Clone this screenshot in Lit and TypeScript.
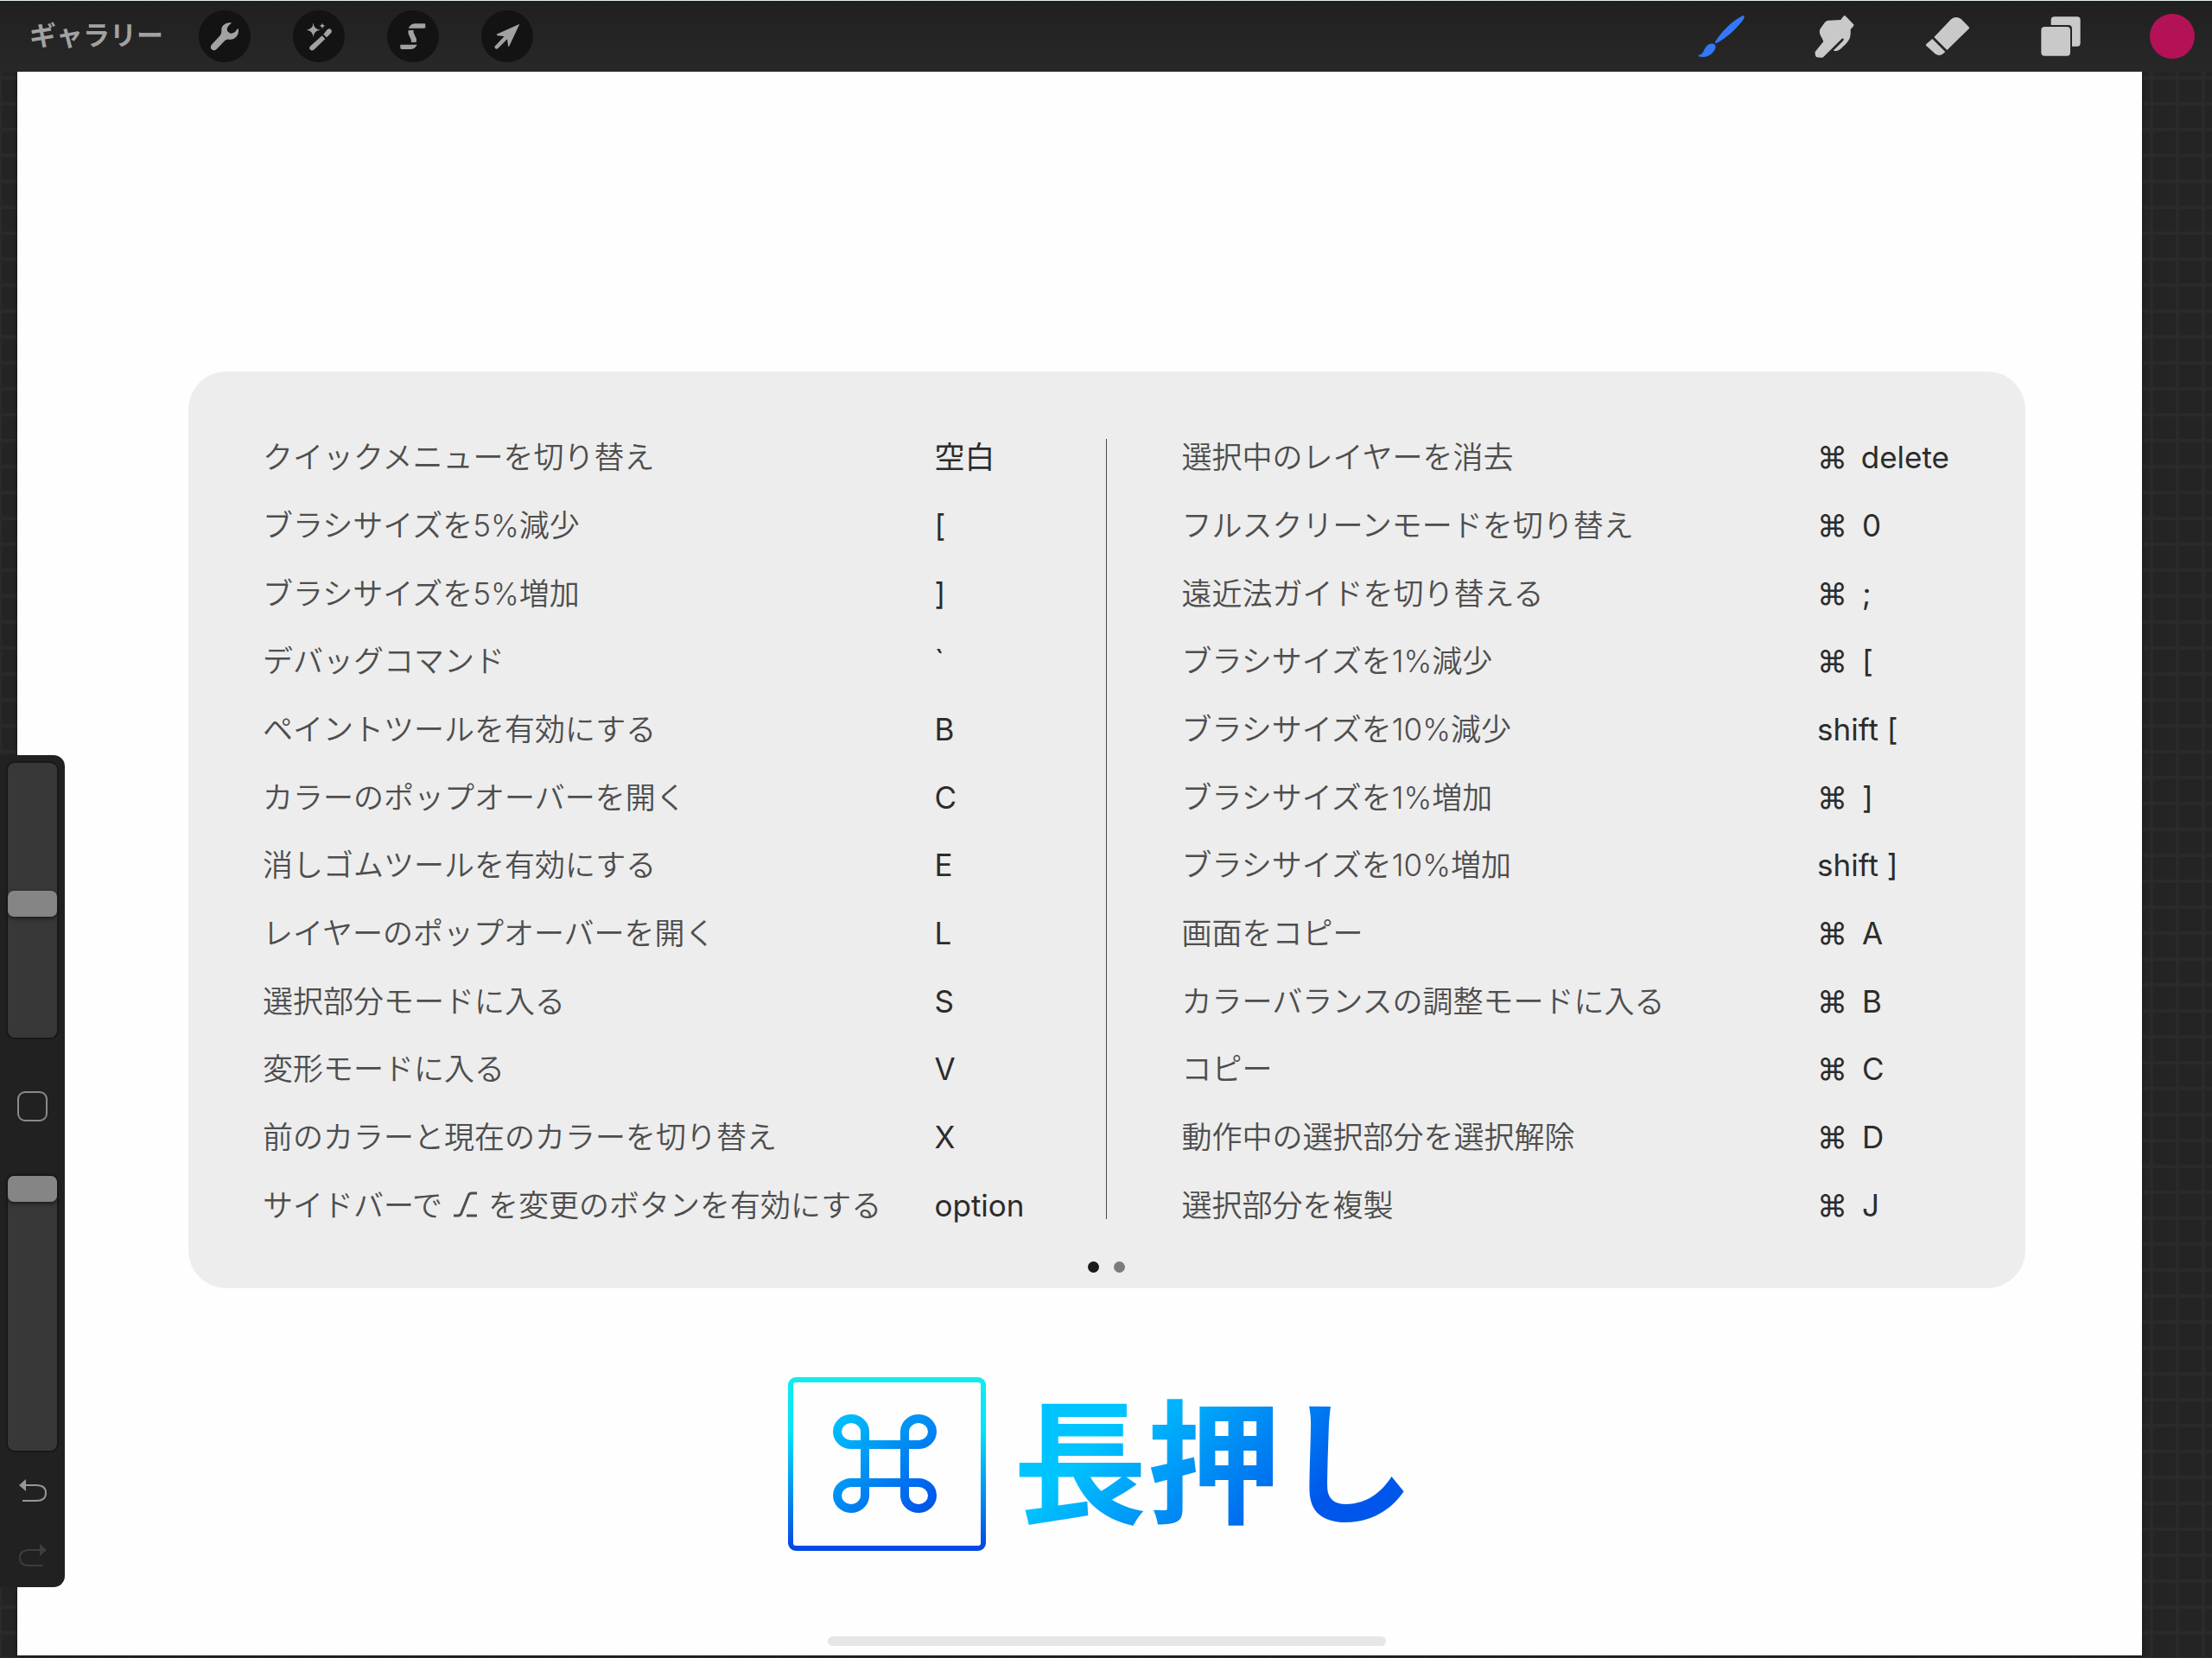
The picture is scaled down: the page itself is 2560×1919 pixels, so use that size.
import { LitElement, html, svg, css } from "lit";
import { customElement, property } from "lit/decorators.js";

const icon = (w: number, h: number, body: unknown, box = `0 0 ${w} ${h}`, cls = "icon") =>
  html`<svg class=${cls} width=${w} height=${h} viewBox=${box} aria-hidden="true">${body}</svg>`;

const wrench = svg`<path fill="currentColor" d="M144 79C130 78 110 86 111 104Q112 117 106 124L78 154C66 166 81 181 93 172L122 142Q129 135 137 137C156 140 172 124 170 102Q169 97 164 103C158 117 140 119 136 112C128 106 128 96 140 85Q147 80 144 79Z"/>`;
const wand = svg`<g fill="currentColor"><path d="M429 79Q430 102 453 104Q430 106 429 130Q427 106 405 104Q427 102 429 79Z"/><path d="M460 79Q461 89 471 90Q461 91 460 101Q459 91 449 90Q459 89 460 79Z"/><path d="M464 119L477 103C485 94 498 104 490 115L475 130Z"/><path d="M459 124L470 135L432 172C422 181 409 169 419 160Z"/></g>`;
const selection = svg`<g fill="currentColor"><path d="M758 98Q766 82 782 82H813Q817 82 817 86V94Q817 98 813 98Z"/><path d="M757 106L775 104Q775 112 780 122Q788 134 786 146L768 147Q769 138 762 127Q756 118 757 106Z"/><path d="M730 155H788Q781 171 764 171H735Q730 171 730 166Z"/></g>`;
const arrow = svg`<path fill="currentColor" d="M1143 83L1108 158Q1104 166 1103 158L1100 136L1068 168C1062 174 1053 166 1058 160L1090 126L1067 124Q1060 122 1066 118Z"/>`;
const brush = svg`<g fill="currentColor"><path d="M230 55Q233 57 229 66C205 100 170 132 133 151L129 147C150 112 190 72 225 55Q229 53 230 55Z"/><path d="M104 157C113 150 126 150 130 157C134 164 129 176 121 183C108 198 88 201 73 196Q69 194 74 191C92 187 88 171 104 157Z"/></g>`;
const smudge = svg`<path fill="currentColor" d="M579 53Q582 54 612 86Q610 93 600 102C602 130 596 142 576 160C562 174 556 178 545 177Q538 174 545 171L574 142Q579 136 575 134Q571 132 567 137L508 196Q505 201 499 200L483 199Q476 196 477 180L506 144Q503 138 501 132C492 118 490 108 496 98L510 79Q515 72 522 71L566 69Q571 60 579 53Z"/>`;
const eraser = svg`<g fill="currentColor"><path d="M950 67Q967 54 985 66L1012 94Q1015 97 1012 100L936 174L891 129Z"/><path d="M885 135L930 180L922 187Q909 197 895 187L864 159Q861 156 864 153Z"/></g>`;
const layers = svg`<g fill="currentColor"><path d="M1298 87V70Q1298 58 1310 58H1389Q1400 58 1400 69V149Q1400 161 1389 161H1371V100Q1371 87 1358 87Z"/><rect x="1264" y="93" width="101" height="101" rx="12"/></g>`;
const option = svg`<path fill="none" stroke="currentColor" stroke-width="3" d="M1 28H6Q9 28 10 25L18 5Q19 2 22 2H28M16 28H28"/>`;
const undo = svg`<path fill="currentColor" d="M0 7L8 0V14Z"/><path fill="none" stroke="currentColor" stroke-width="2" d="M7 7H20Q31 7 31 16Q31 25 20 25H4"/>`;
const redo = svg`<path fill="currentColor" d="M32 7L24 0V14Z"/><path fill="none" stroke="currentColor" stroke-width="2" d="M25 7H12Q1 7 1 16Q1 25 12 25H28"/>`;

interface Shortcut { label: string; key: string; cmd?: boolean; }
const k = (label: string, key: string, cmd = false): Shortcut => ({ label, key, cmd });

const LEFT: Shortcut[] = [
  k("クイックメニューを切り替え", "空白"), k("ブラシサイズを5%減少", "["), k("ブラシサイズを5%増加", "]"),
  k("デバッグコマンド", "`"), k("ペイントツールを有効にする", "B"), k("カラーのポップオーバーを開く", "C"),
  k("消しゴムツールを有効にする", "E"), k("レイヤーのポップオーバーを開く", "L"), k("選択部分モードに入る", "S"),
  k("変形モードに入る", "V"), k("前のカラーと現在のカラーを切り替え", "X"), k("サイドバーで⌥を変更のボタンを有効にする", "option"),
];
const RIGHT: Shortcut[] = [
  k("選択中のレイヤーを消去", "delete", true), k("フルスクリーンモードを切り替え", "0", true),
  k("遠近法ガイドを切り替える", ";", true), k("ブラシサイズを1%減少", "[", true), k("ブラシサイズを10%減少", "shift ["),
  k("ブラシサイズを1%増加", "]", true), k("ブラシサイズを10%増加", "shift ]"), k("画面をコピー", "A", true),
  k("カラーバランスの調整モードに入る", "B", true), k("コピー", "C", true), k("動作中の選択部分を選択解除", "D", true),
  k("選択部分を複製", "J", true),
];

const reset = css`
  * { box-sizing: border-box; }
  button { appearance: none; border: 0; padding: 0; margin: 0; background: none; color: inherit; font: inherit; cursor: pointer; }
  svg { display: block; overflow: visible; }
`;

@customElement("tool-bar")
export class ToolBar extends LitElement {
  static styles = [reset, css`
    :host { display: flex; justify-content: space-between; align-items: center; height: 83px; padding: 0 20px 0 34px;
      background: linear-gradient(#202020, #282828); border-top: 1px solid #e4efea; color: #a2a2a2; }
    .left, .right { display: flex; align-items: center; }
    .left { gap: 49px; }
    .right { gap: 75px; color: #c9c9c9; }
    .gallery { font-size: 31px; line-height: 40px; font-weight: 700; margin: 0 -8px 2px 0; }
    .round { width: 60px; height: 60px; border-radius: 50%; background: #131313; }
    .tool { width: 56px; height: 60px; }
    .active { color: #3478f6; }
    .color { width: 52px; height: 52px; border-radius: 50%; background: #b31257; }
  `];
  render() {
    return html`
      <div class="left">
        <button class="gallery">ギャラリー</button>
        <button class="round" aria-label="アクション">${icon(60, 60, wrench, "32 36 180 180")}</button>
        <button class="round" aria-label="調整">${icon(60, 60, wand, "358 36 180 180")}</button>
        <button class="round" aria-label="選択">${icon(60, 60, selection, "684 36 180 180")}</button>
        <button class="round" aria-label="変形">${icon(60, 60, arrow, "1010 36 180 180")}</button>
      </div>
      <div class="right">
        <button class="tool active" aria-label="ペイント">${icon(56, 60, brush, "67 36 168 180")}</button>
        <button class="tool" aria-label="ぼかし">${icon(56, 60, smudge, "460 36 168 180")}</button>
        <button class="tool" aria-label="消去">${icon(56, 60, eraser, "854 36 168 180")}</button>
        <button class="tool" aria-label="レイヤー">${icon(56, 60, layers, "1248 36 168 180")}</button>
        <button class="color" aria-label="カラー"></button>
      </div>`;
  }
}

@customElement("side-bar")
export class SideBar extends LitElement {
  static styles = [reset, css`
    :host { display: flex; flex-direction: column; align-items: center; width: 75px; padding: 9px 0 24px;
      background: #212121; border-radius: 0 13px 13px 0; }
    .slider { appearance: none; writing-mode: vertical-lr; direction: rtl; width: 57px; height: 318px; margin: 0; border-radius: 8px;
      background: #383838; box-shadow: 0 0 0 2px #181818; }
    .slider::-webkit-slider-thumb { appearance: none; width: 57px; height: 30px; border-radius: 7px; background: #858585;
      box-shadow: 0 2px 5px #1a1a1a; }
    .modify { width: 35px; height: 35px; margin: 62px 0 63px; border: 2px solid #8a8a8a; border-radius: 9px; }
    .undo { color: #979797; margin-top: 33px; }
    .redo { color: #3d3d3d; margin-top: 49px; }
  `];
  render() {
    return html`
      <input class="slider" type="range" min="0" max="1000" .value=${"485"} aria-label="ブラシサイズ" />
      <button class="modify" aria-label="変更"></button>
      <input class="slider" type="range" min="0" max="1000" .value=${"1000"} aria-label="ブラシの不透明度" />
      <button class="undo" aria-label="取り消す">${icon(32, 26, undo)}</button>
      <button class="redo" aria-label="やり直す">${icon(32, 26, redo)}</button>`;
  }
}

@customElement("shortcut-table")
export class ShortcutTable extends LitElement {
  @property({ attribute: false }) rows: Shortcut[] = [];
  static styles = css`
    :host { display: block; font-size: 35px; line-height: 52px; }
    table { width: 100%; height: 944px; border-collapse: collapse; }
    td, th { padding: 0; vertical-align: middle; text-align: left; white-space: nowrap; }
    th { color: #4e4e4e; font-weight: 350; }
    td { color: #2c2c2c; width: 1px; font-weight: 400; }
    .keys { display: flex; width: var(--key-width); }
    .cmd { width: 52px; }
    .option { display: inline-block; margin: 0 12px -1px 12px; }
  `;
  private label(text: string) {
    const [a, b] = text.split("⌥");
    return b === undefined ? a : html`${a}${icon(29, 30, option, "0 0 29 30", "option")}${b}`;
  }
  render() {
    return html`<table><tbody>${this.rows.map((r) => html`
      <tr><th scope="row">${this.label(r.label)}</th>
      <td><span class="keys">${r.cmd ? html`<span class="cmd">⌘</span>` : ""}<span>${r.key}</span></span></td></tr>`)}</tbody></table>`;
  }
}

@customElement("app-root")
export class AppRoot extends LitElement {
  static styles = [reset, css`
    :host { display: flex; flex-direction: column; position: relative; min-height: 100vh;
      font-family: Inter, "Noto Sans CJK JP", sans-serif; background-color: #242424;
      background-image: linear-gradient(90deg, #2a2a2a 4px, transparent 4px), linear-gradient(#2a2a2a 4px, transparent 4px);
      background-size: 30px 30px; background-position: -2px -2px; }
    .canvas { flex: 1; display: flex; flex-direction: column; align-items: center; margin: 0 81px 3px 20px; background: #fefefe;
      padding: 347px 135px 11px 198px; box-shadow: 0 0 3px #111; }
    tool-bar { position: relative; }
    .panel { width: 100%; background: #ededed; border-radius: 44px; padding: 60px 88px 18px 86px; }
    .columns { display: grid; grid-template-columns: 1fr 1px 1fr; }
    .divider { background: #4a4a4a; margin: 18px 0 23px; }
    .first { --key-width: 198px; }
    .second { --key-width: 153px; margin-left: 87px; }
    .dots { display: flex; justify-content: center; gap: 17px; margin-top: 26px; }
    .dot { width: 13px; height: 13px; border-radius: 50%; background: #7b7b7b; }
    .on { background: #1a1a1a; }
    .hint { display: flex; align-items: center; gap: 32px; margin: 103px 13px 0 0; }
    .word { margin: 0; font-size: 155px; line-height: 201px; font-weight: 700;
      background: linear-gradient(135deg, #00c4ff 25%, #0056ea 75%); background-clip: text; -webkit-background-clip: text; color: transparent; }
    .home { width: 646px; height: 11px; border-radius: 6px; background: #e6e6e6; margin-top: auto; }
    side-bar { position: absolute; left: 0; top: 874px; }
  `];
  render() {
    return html`
      <tool-bar></tool-bar>
      <main class="canvas">
        <section class="panel">
          <div class="columns">
            <shortcut-table class="first" .rows=${LEFT}></shortcut-table>
            <div class="divider"></div>
            <shortcut-table class="second" .rows=${RIGHT}></shortcut-table>
          </div>
          <div class="dots"><span class="dot on"></span><span class="dot"></span></div>
        </section>
        <div class="hint">
          <svg width="229" height="201" viewBox="0 0 229 201" role="img" aria-label="command">
            <defs>
              <linearGradient id="edge" x1="0" y1="0" x2="0" y2="1"><stop offset="0" stop-color="#12ebee"/><stop offset=".3" stop-color="#04e2fa"/><stop offset="1" stop-color="#0648e4"/></linearGradient>
              <linearGradient id="loop" gradientUnits="userSpaceOnUse" x1="60" y1="40" x2="165" y2="155"><stop offset="0" stop-color="#00c4fb"/><stop offset="1" stop-color="#0052ea"/></linearGradient>
            </defs>
            <rect x="3" y="3" width="223" height="195" rx="6" fill="none" stroke="url(#edge)" stroke-width="6"/>
            <path fill="none" stroke="url(#loop)" stroke-width="10" d="M90 78H73A16 15 0 1 1 89 62V138A16 15 0 1 1 73 122H151A16 15 0 1 1 135 138V62A16 15 0 1 1 151 78H90"/>
          </svg>
          <h1 class="word">長押し</h1>
        </div>
        <div class="home"></div>
      </main>
      <side-bar></side-bar>`;
  }
}
